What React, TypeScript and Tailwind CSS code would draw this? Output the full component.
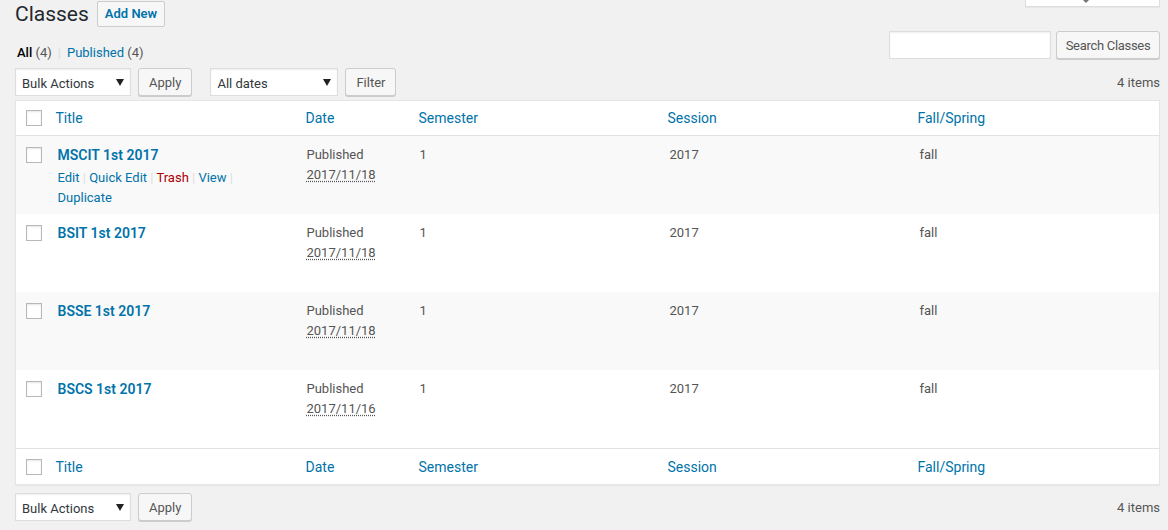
import React from "react";

const font = { fontFamily: '"Segoe UI", Roboto, "Liberation Sans", sans-serif' };

function Check() {
  return <span className="block w-4 h-4 border border-[#b4b9be] bg-white shadow-[inset_0_1px_2px_rgba(0,0,0,0.1)]" />;
}

function Select({ label, w }: { label: string; w: string }) {
  return (
    <div className={`${w} h-[28px] border border-[#ddd] bg-white shadow-[inset_0_1px_2px_rgba(0,0,0,0.07)] flex items-center justify-between pl-[6px] pr-[6px] text-[13px] text-[#32373c]`}>
      <span className="pt-[3px]">{label}</span>
      <svg width="8" height="7" viewBox="0 0 8 7"><path d="M0 0h8L4 7z" fill="#222" /></svg>
    </div>
  );
}

function Btn({ children }: { children: React.ReactNode }) {
  return (
    <div className="h-[28px] px-[10px] pt-[1px] flex items-center border border-[#ccc] bg-[#f7f7f7] rounded-[3px] shadow-[0_1px_0_#ccc] text-[13px] text-[#555]">
      {children}
    </div>
  );
}

const rows = [
  { t: "MSCIT 1st 2017", d: "2017/11/18", hover: true },
  { t: "BSIT 1st 2017", d: "2017/11/18" },
  { t: "BSSE 1st 2017", d: "2017/11/18" },
  { t: "BSCS 1st 2017", d: "2017/11/16" },
];

function HeadRow({ bottom }: { bottom?: boolean }) {
  const th = `text-left font-normal text-[14px] leading-[19px] px-[10px] ${bottom ? "pt-[9px] pb-[7px]" : "py-[7px]"} text-[#0073aa]`;
  return (
    <tr className={bottom ? "border-t border-[#e1e1e1] h-[36px]" : "border-b border-[#e1e1e1] h-[35px]"}>
      <td className={`pl-[10px] ${bottom ? "pt-[10px]" : "pt-[9px]"} pb-[7px] align-top`}><Check /></td>
      <th className={th}>Title</th>
      <th className={th}>Date</th>
      <th className={th}>Semester</th>
      <th className={th}>Session</th>
      <th className={th}>Fall/Spring</th>
    </tr>
  );
}

export default function App() {
  const sep = <span className="text-[#ddd]"> | </span>;
  const td = "px-[11px] pt-[9px] pb-[7px] align-top text-[13px] leading-[19.5px] text-[#555]";
  return (
    <div className="min-h-[530px] bg-[#f1f1f1] pl-[15px] pr-[8px] relative" style={font}>
      <div className="absolute right-[8px] top-[-20px] w-[135px] h-[27px] bg-white border border-[#ddd] shadow-[0_1px_1px_rgba(0,0,0,0.04)]">
        <svg className="absolute left-[56px] top-[18px]" width="8" height="4" viewBox="0 0 8 4"><path d="M0 0h8L4 4z" fill="#72777c" /></svg>
      </div>
      <div className="flex items-start h-[31px]">
        <h1 className="text-[21px] leading-[29px] text-[#23282d] font-normal">Classes</h1>
        <div className="ml-[8px] mt-[1px] h-[26px] px-[7px] flex items-center border border-[#ccc] bg-[#f7f7f7] rounded-[2px] text-[13px] font-semibold text-[#0073aa]">
          Add New
        </div>
      </div>
      <div className="flex justify-between h-[28px]">
        <div className="pt-[13px] text-[13px] leading-[18px] text-[#555] pl-[2px]">
          <span className="text-black font-medium">All</span> (4)
          <span className="text-[#ddd] mx-[6px]">|</span>
          <span className="text-[#0073aa]">Published</span> (4)
        </div>
        <div className="flex gap-[5px]">
          <div className="w-[162px] h-[28px] bg-white border border-[#ddd] shadow-[inset_0_1px_2px_rgba(0,0,0,0.07)]" />
          <div className="w-[104px] h-[28px] pt-[1px] flex items-center justify-center border border-[#ccc] bg-[#f7f7f7] rounded-[3px] shadow-[0_1px_0_#ccc] text-[13px] text-[#555]">
            <span className="tracking-[-0.3px]">Search Classes</span>
          </div>
        </div>
      </div>
      <div className="flex items-center justify-between mt-[9px] h-[28px]">
        <div className="flex items-center">
          <Select label="Bulk Actions" w="w-[116px]" />
          <div className="ml-[7px]"><Btn>Apply</Btn></div>
          <div className="ml-[18px]"><Select label="All dates" w="w-[128px]" /></div>
          <div className="ml-[7px]"><Btn>Filter</Btn></div>
        </div>
        <span className="text-[13px] text-[#555] pt-[1px]">4 items</span>
      </div>
      <table className="mt-[4px] w-full table-fixed border border-[#e5e5e5] bg-white shadow-[0_1px_1px_rgba(0,0,0,0.04)] border-collapse">
        <colgroup>
          <col className="w-[30px]" />
          <col className="w-[250px]" />
          <col className="w-[113px]" />
          <col className="w-[249px]" />
          <col className="w-[250px]" />
          <col />
        </colgroup>
        <thead><HeadRow /></thead>
        <tbody>
          {rows.map((r, i) => (
            <tr key={i} className={`h-[78px] ${i % 2 === 0 ? "bg-[#f9f9f9]" : "bg-white"}`}>
              <td className="pl-[10px] pt-[11px] align-top"><Check /></td>
              <td className="pl-[12px] pr-[10px] pt-[9px] pb-[7px] align-top text-[13px]">
                <div className="text-[14px] leading-[20px] font-semibold text-[#0073aa]">{r.t}</div>
                <div className={`pt-[3px] leading-[19.5px] text-[#0073aa] ${r.hover ? "" : "invisible"}`}>
                  Edit{sep}Quick Edit{sep}<span className="text-[#a00]">Trash</span>{sep}View<span className="text-[#ddd]"> |</span>
                  <br />Duplicate
                </div>
              </td>
              <td className={td}>
                Published<br />
                <span className="underline decoration-dotted underline-offset-2">{r.d}</span>
              </td>
              <td className={td}>1</td>
              <td className={`${td} pl-[12px]`}>2017</td>
              <td className={`${td} pl-[12px]`}>fall</td>
            </tr>
          ))}
        </tbody>
        <tfoot><HeadRow bottom /></tfoot>
      </table>
      <div className="flex items-center justify-between mt-[8px] h-[28px]">
        <div className="flex items-center">
          <Select label="Bulk Actions" w="w-[116px]" />
          <div className="ml-[7px]"><Btn>Apply</Btn></div>
        </div>
        <span className="text-[13px] text-[#555] pt-[1px]">4 items</span>
      </div>
    </div>
  );
}
